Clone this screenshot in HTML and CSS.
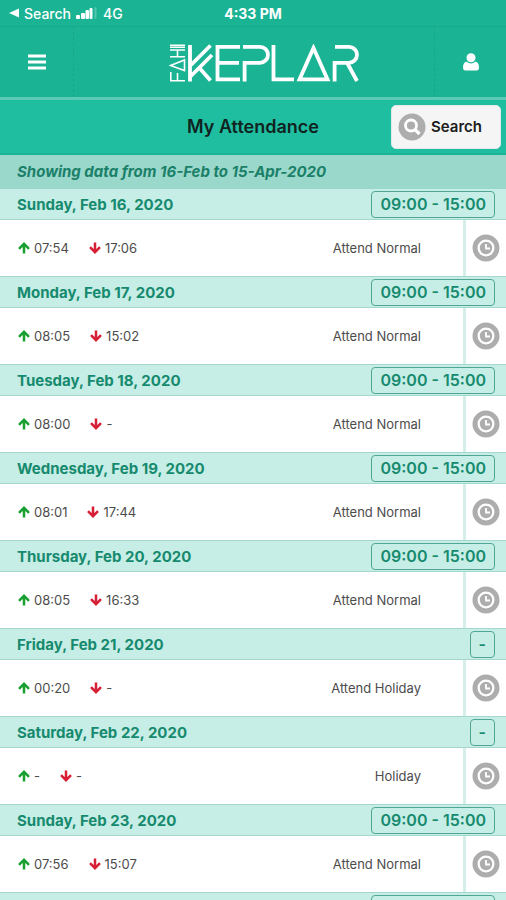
FILE: index.html
```
<!DOCTYPE html>
<html lang="en">
<head>
<meta charset="utf-8">
<meta name="viewport" content="width=device-width, initial-scale=1">
<title>My Attendance</title>
<link rel="stylesheet" href="styles.css">
</head>
<body>
<svg class="defs" aria-hidden="true">
  <symbol id="up" viewBox="0 0 12 12"><path d="M6 11.500V2M1 6.800 6 1.800l5 5" fill="none" stroke="currentColor" stroke-width="2.500"/></symbol>
  <symbol id="down" viewBox="0 0 12 12"><path d="M6 .5V10M1 5.200 6 10.200l5-5" fill="none" stroke="currentColor" stroke-width="2.500"/></symbol>
  <symbol id="clock" viewBox="0 0 28 28"><circle cx="14" cy="14" r="11" fill="#fff" stroke="#adadad" stroke-width="5"/><circle cx="14" cy="14" r="6.200" fill="#adadad"/><path d="M14 10v4.500h4" fill="none" stroke="#fff" stroke-width="1.800"/></symbol>
</svg>
<div class="app">
  <div class="status">
    <div class="status-left">
      <svg class="back" viewBox="0 0 10 10" aria-hidden="true"><path d="M0 5 10 .5v9z" fill="#fff"/></svg>
      <span>Search</span>
      <svg class="signal" viewBox="0 0 22 12" aria-hidden="true"><g fill="#fff"><rect y="8" width="4" height="4" rx="1"/><rect x="5" y="6" width="4" height="6" rx="1"/><rect x="9.500" y="3" width="3.500" height="9" rx="1"/><rect x="13.500" y="1" width="3" height="11" rx="1"/><rect x="18.500" width="2" height="12" rx="1" opacity=".25"/></g></svg>
      <span>4G</span>
    </div>
    <div class="time">4:33 PM</div>
  </div>
  <header class="topbar">
    <button class="bar-btn" aria-label="Menu"><svg class="menu" viewBox="0 0 18 16"><path d="M0 2h18M0 8h18M0 14h18" stroke="#fff" stroke-width="3.200"/></svg></button>
    <svg class="logo" viewBox="0 0 190 40" role="img" aria-label="Fahi Keplar">
      <g fill="none" stroke="#fff" stroke-width="3.800">
        <path d="M21 1v36.500M41.500 1.500 22 21M43 11 22 32M30 23.500 41.500 36.500"/>
        <path d="M71 2.800H48.500v32.600H71M49 18.800h21"/>
        <path d="M74 2.800h17a8 8 0 0 1 0 16H75.600V37.500"/>
        <path d="M104.500 1v34.400H125"/>
        <path d="M144.500 4 130.500 35.400h28z"/>
        <path d="M166 2.800h14a8 8 0 0 1 0 16h-14.400V37.500M178.500 19.500 188 37"/>
      </g>
      <g fill="none" stroke="#fff" stroke-width="1.600">
        <path d="M1 36.700h15M1.800 37V28M8.500 37V29"/>
        <path d="M1.500 21.500 15.500 16v10.500z"/>
        <path d="M1 12.800h15M1 6h15M8.500 6v7M1 1.200h15M1 3.200h15"/>
      </g>
    </svg>
    <button class="bar-btn" aria-label="Profile"><svg class="user" viewBox="0 0 16 18"><circle cx="8" cy="4.800" r="4.500" fill="#fff"/><path d="M3.500 8.500Q8 12.500 12.500 8.500 16 9.500 16 14.500 16 17.500 13.500 17.500h-11Q0 17.500 0 14.500 0 9.500 3.500 8.500z" fill="#fff"/></svg></button>
  </header>
  <div class="titlebar">
    <h1>My Attendance</h1>
    <button class="search"><svg viewBox="0 0 28 28" aria-hidden="true"><circle cx="14" cy="14" r="13.500" fill="#adadad"/><circle cx="13" cy="12.500" r="5.500" fill="none" stroke="#fff" stroke-width="2.800"/><path d="m17 16.500 4.500 4.500" stroke="#fff" stroke-width="3.200"/></svg>Search</button>
  </div>
  <p class="range">Showing data from 16-Feb to 15-Apr-2020</p>
  <main class="days" id="days"></main>
</div>
<script src="app.js"></script>
</body>
</html>
```
FILE: styles.css
```
* { box-sizing: border-box; }
body {
  margin: 0;
  background: #fff;
  font-family: Inter, "Liberation Sans", sans-serif;
  color: #4c4c4c;
}
button {
  border: 0;
  background: none;
  padding: 0;
  font: inherit;
  cursor: pointer;
}
svg { display: block; }
.defs { display: none; }
.app { height: 100vh; overflow: hidden; }

.status {
  display: grid;
  grid-template-columns: 1fr auto 1fr;
  align-items: center;
  height: 26px;
  padding: 0 9px;
  background: #1ab394;
  color: #fff;
  font-size: 14px;
}
.status-left { display: flex; align-items: center; gap: 5px; font-weight: 500; }
.time { font-weight: 700; }
.back { width: 10px; height: 10px; }
.signal { width: 22px; height: 12px; }

.topbar {
  display: grid;
  grid-template-columns: 74px 1fr 72px;
  height: 71px;
  background: #1ab394;
  border-top: 1px solid #18a98b;
}
.bar-btn { display: grid; place-items: center; }
.bar-btn:first-child { border-right: 1px dashed #18a78a; }
.bar-btn:last-child { border-left: 1px dashed #18a78a; }
.menu { width: 18px; height: 16px; }
.user { width: 16px; height: 18px; }
.logo { width: 190px; height: 40px; place-self: center; margin: 3px 0 0 20px; }

.titlebar {
  display: grid;
  grid-template-columns: 1fr auto 1fr;
  align-items: center;
  height: 58px;
  padding: 0 5px;
  background: #20bea0;
  border-top: 3px solid #5cc9b4;
  border-bottom: 2px solid #1ab394;
}
h1 {
  grid-column: 2;
  margin: 0;
  font-size: 18px;
  font-weight: 600;
  color: #10231f;
}
.search {
  justify-self: end;
  display: flex;
  align-items: center;
  gap: 5px;
  width: 110px;
  height: 44px;
  padding: 0 6px;
  border: 1px solid #e4e8e7;
  border-radius: 5px;
  background: #f5f5f5;
  color: #1c1c1c;
  font-size: 15px;
  font-weight: 600;
}
.search svg { width: 28px; height: 28px; flex: none; }

.range {
  margin: 0;
  padding: 0 17px;
  background: #9bd8cc;
  color: #1a8068;
  font-size: 15px;
  line-height: 34px;
  font-weight: 700;
  font-style: italic;
}

.day-head {
  display: flex;
  align-items: center;
  justify-content: space-between;
  height: 32px;
  padding: 0 11px 0 17px;
  background: #c6eee6;
  border-top: 1px solid #a5d8cc;
  border-bottom: 1px solid #a5d8cc;
  color: #168a6e;
}
.day:first-child .day-head { height: 31px; border-top: 0; }
h2 { margin: 0; font-size: 15px; font-weight: 700; }
.shift {
  padding: 0 8px;
  border: 1px solid #4fa793;
  border-radius: 4px;
  font-size: 16px;
  line-height: 25px;
  font-weight: 600;
}
.day-body {
  display: grid;
  grid-template-columns: 1fr auto 43px;
  align-items: center;
  height: 56px;
  padding-left: 18px;
  font-size: 13px;
}
.times { display: flex; gap: 20px; }
.punch { display: flex; align-items: center; gap: 4px; }
.punch svg { width: 12px; height: 12px; }
.in svg { color: #17a02f; }
.out svg { color: #d81e34; }
.kind { padding-right: 42px; }
.clock {
  display: grid;
  place-items: center;
  align-self: stretch;
  border-left: 3px solid #d5eee9;
}
.clock svg { width: 28px; height: 28px; }
```
FILE: app.js
```
const days = [
  ["Sunday, Feb 16, 2020", "09:00 - 15:00", "07:54", "17:06", "Attend Normal"],
  ["Monday, Feb 17, 2020", "09:00 - 15:00", "08:05", "15:02", "Attend Normal"],
  ["Tuesday, Feb 18, 2020", "09:00 - 15:00", "08:00", "-", "Attend Normal"],
  ["Wednesday, Feb 19, 2020", "09:00 - 15:00", "08:01", "17:44", "Attend Normal"],
  ["Thursday, Feb 20, 2020", "09:00 - 15:00", "08:05", "16:33", "Attend Normal"],
  ["Friday, Feb 21, 2020", "-", "00:20", "-", "Attend Holiday"],
  ["Saturday, Feb 22, 2020", "-", "-", "-", "Holiday"],
  ["Sunday, Feb 23, 2020", "09:00 - 15:00", "07:56", "15:07", "Attend Normal"],
  ["Monday, Feb 24, 2020", "09:00 - 15:00", "-", "-", ""]
];

const icon = id => `<svg aria-hidden="true"><use href="#${id}"/></svg>`;

document.getElementById("days").innerHTML = days.map(([date, shift, tin, tout, kind]) => `
  <section class="day">
    <div class="day-head"><h2>${date}</h2><span class="shift">${shift}</span></div>
    <div class="day-body">
      <div class="times">
        <span class="punch in">${icon("up")}${tin}</span>
        <span class="punch out">${icon("down")}${tout}</span>
      </div>
      <span class="kind">${kind}</span>
      <button class="clock" aria-label="Details for ${date}">${icon("clock")}</button>
    </div>
  </section>`).join("");
```
